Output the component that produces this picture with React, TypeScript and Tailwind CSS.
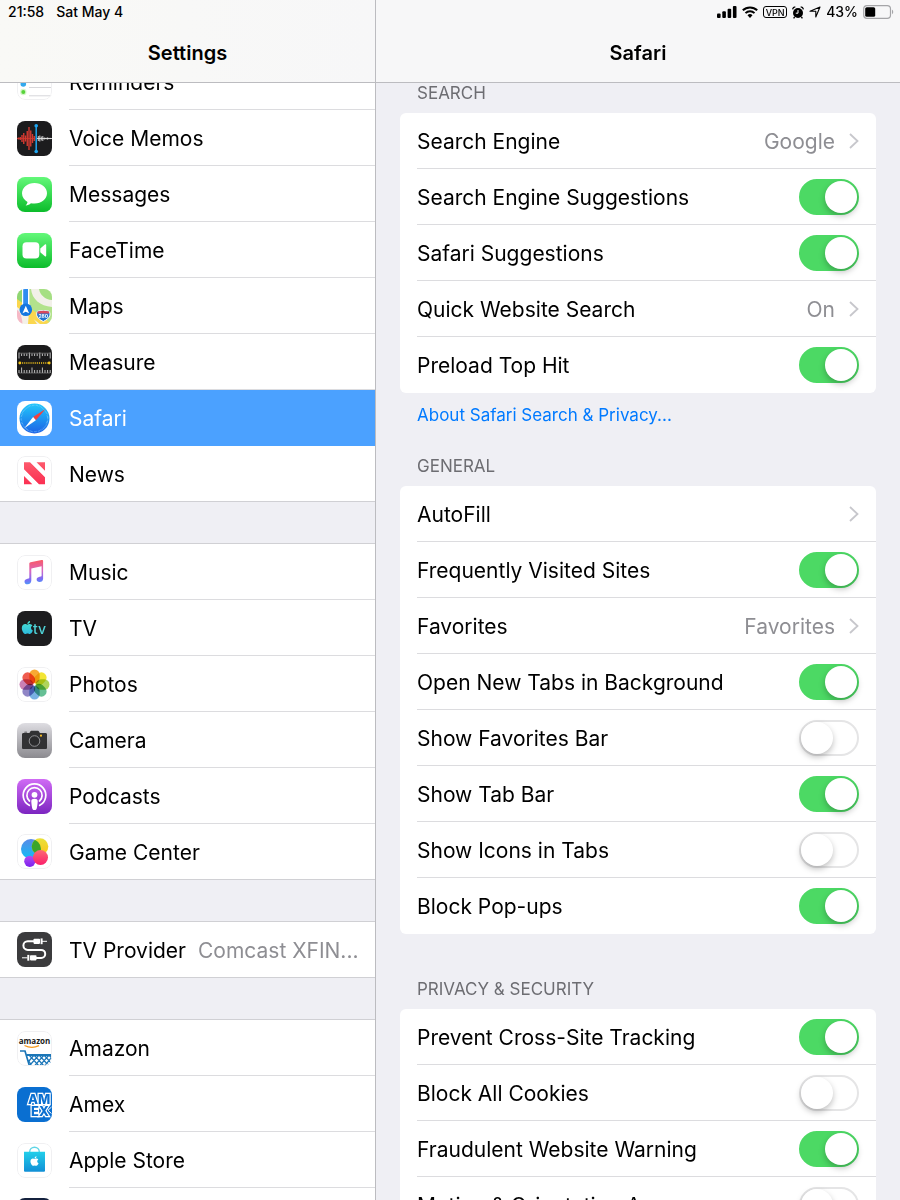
import type { ReactNode } from "react";
import clsx from "clsx";
import { FaApple } from "react-icons/fa";

/* ---------- App icons ---------- */

function Tile({
  fill = "#ffffff",
  outlined = false,
  children,
}: {
  fill?: string;
  outlined?: boolean;
  children?: ReactNode;
}) {
  return (
    <svg viewBox="0 0 35 35" className="size-[35px] shrink-0 rounded-lg" aria-hidden="true">
      <rect width="35" height="35" fill={fill} />
      {children}
      {outlined && (
        <rect x="0.5" y="0.5" width="34" height="34" rx="7.5" fill="none" stroke="#f0f0f2" />
      )}
    </svg>
  );
}

function Gradient({ id, stops }: { id: string; stops: string[] }) {
  return (
    <linearGradient id={id} x1="0" y1="0" x2="0" y2="1">
      {stops.map((color, i) => (
        <stop key={color} offset={i / (stops.length - 1)} stopColor={color} />
      ))}
    </linearGradient>
  );
}

function RemindersIcon() {
  return (
    <Tile outlined>
      <circle cx="6.3" cy="11" r="2.6" fill="#ff9500" />
      <circle cx="6.3" cy="19" r="2.8" fill="#32a9ee" />
      <circle cx="6.3" cy="27" r="3.2" fill="#d5f5cb" />
      <circle cx="6.3" cy="27" r="2" fill="#57d33a" />
      <path d="M12 14.5h23M12 22.5h23M12 30.8h23" stroke="#d2d2d6" strokeWidth="0.9" />
    </Tile>
  );
}

function VoiceMemosIcon() {
  const red = [1, 1.5, 3.5, 5.5, 3, 7.5, 11.5, 8, 4.5, 2.5];
  const white = [2.5, 3, 2, 2.5, 1, 0.7, 1.2, 0.7, 0.6];
  return (
    <Tile fill="#1c1c1e">
      <path d="M0 17.5h18" stroke="#d33a31" strokeWidth="0.8" />
      <path d="M20 17.5h15" stroke="#ffffff" strokeWidth="0.8" />
      {red.map((h, i) => (
        <path key={i} d={`M${1.5 + i * 1.75} ${17.5 - h}v${h * 2}`} stroke="#d33a31" strokeWidth="1.4" />
      ))}
      {white.map((h, i) => (
        <path key={i} d={`M${21.3 + i * 1.5} ${17.5 - h}v${h * 2}`} stroke="#e5e5e5" strokeWidth="0.9" />
      ))}
      <path d="M19.2 4.5v26" stroke="#1ea7f2" strokeWidth="1.5" />
      <circle cx="19.2" cy="4.7" r="1.8" fill="#1ea7f2" />
      <circle cx="19.2" cy="30.5" r="1.8" fill="#1ea7f2" />
    </Tile>
  );
}

function MessagesIcon() {
  return (
    <Tile fill="url(#messages)">
      <Gradient id="messages" stops={["#63f879", "#0cbc2b"]} />
      <path
        d="M17.5 6C10.500 6 5 10.500 5 16.300c0 3.700 2.200 6.800 5.500 8.600-.2 1.300-.8 2.500-1.900 3.500 2.100-.1 3.900-.9 5.300-2.200 1.200.3 2.400.4 3.600.4 7 0 12.500-4.600 12.500-10.300S24.500 6 17.500 6z"
        fill="#fff"
      />
    </Tile>
  );
}

function FaceTimeIcon() {
  return (
    <Tile fill="url(#facetime)">
      <Gradient id="facetime" stops={["#63f879", "#0cbc2b"]} />
      <rect x="5.500" y="9.300" width="16.800" height="16.200" rx="4" fill="#fff" />
      <path d="M23.300 15.600l4.600-4.100c.7-.6 1.300-.3 1.300.5v10.800c0 .8-.6 1.100-1.300.5l-4.600-4.100z" fill="#fff" />
    </Tile>
  );
}

function MapsIcon() {
  return (
    <Tile fill="#f4f1e8">
      <rect width="5" height="16" fill="#8fd672" />
      <path d="M12.500 0h5c1 8 7 14 17.500 15.500V35h-9C19 30 13.500 25 12.500 20z" fill="#b2e28c" />
      <path d="M14 0h8c1 6 6 10.500 13 11v7C23 17 15 10 14 0z" fill="#f2f0e9" />
      <path d="M22 0h13v11C28 10.500 23 6 22 0z" fill="#a5df83" />
      <path d="M0 10l35 25h-12L0 18z" fill="#fbd74e" />
      <path d="M0 21c3 1 5 7 5.500 14H0z" fill="#f6b9c6" />
      <path d="M12 23l8 12h-9z" fill="#fbd74e" />
      <rect x="5" width="7" height="20" fill="#fff" />
      <rect x="6.200" width="4.800" height="18" fill="#2f8df0" />
      <circle cx="8.800" cy="20.800" r="6.300" fill="#1677e0" />
      <path d="M8.800 16.700l3.300 7.600-3.300-1.500-3.300 1.500z" fill="#fff" />
      <path
        d="M20.500 22.300c2-.6 3.500-.7 5.800-.7s3.800.1 5.800.7c.7 1.300 1.100 2.400.8 4-.7 3-3.600 4.600-6.600 6.200-3-1.600-5.900-3.200-6.600-6.200-.3-1.600.1-2.700.8-4z"
        fill="#2274cf"
        stroke="#fff"
        strokeWidth="1"
      />
      <path d="M20.500 22.400c4-1 7.600-1 11.600 0v2H20.500z" fill="#d8495d" />
      <text x="26.300" y="29.300" textAnchor="middle" className="font-['Inter'] text-[5px] font-bold" fill="#fff">
        280
      </text>
    </Tile>
  );
}

function MeasureIcon() {
  return (
    <Tile fill="#1b1b1c">
      {Array.from({ length: 13 }, (_, i) => (
        <path
          key={i}
          d={`M${2 + i * 2.6} ${i % 4 === 0 ? 7.5 : 8.500}V${i % 4 === 0 ? 13.500 : 11}M${2 + i * 2.6} 28V${i % 4 === 1 ? 22.500 : 25}`}
          stroke="#cfcfcf"
          strokeWidth="0.9"
        />
      ))}
      <path d="M2 8.200h31M2 28h31" stroke="#8b8b8b" strokeWidth="0.600" />
      <path d="M3 18h29" stroke="#f5c518" strokeWidth="1.400" strokeDasharray="1.100 1" />
      <circle cx="2.800" cy="18" r="1.400" fill="#f5c518" />
      <circle cx="32.200" cy="18" r="1.400" fill="#f5c518" />
    </Tile>
  );
}

function SafariIcon() {
  return (
    <Tile>
      <Gradient id="safari" stops={["#21c8fb", "#1d62e6"]} />
      <circle cx="17.500" cy="17.500" r="15" fill="url(#safari)" />
      <circle cx="17.500" cy="17.500" r="13.200" fill="none" stroke="#8fd4fb" strokeWidth="1.300" strokeDasharray="0.400 0.980" />
      <path d="M28.500 8L16.100 16l2.800 3.200z" fill="#f5413d" />
      <path d="M7.300 27.300L16.100 16l2.800 3.200z" fill="#fff" />
    </Tile>
  );
}

function NewsIcon() {
  return (
    <Tile outlined>
      <Gradient id="news" stops={["#fd5a6c", "#fb2f52"]} />
      <path
        d="M7 6.300h6L28 21.300v7h-6L7 13.300zM19.500 6.300H28v8.500zM7 20v8.300h8.300z"
        fill="url(#news)"
      />
    </Tile>
  );
}

function MusicIcon() {
  return (
    <Tile outlined>
      <linearGradient id="music" gradientUnits="userSpaceOnUse" x1="17" y1="5" x2="19" y2="29">
        <stop offset="0" stopColor="#fb5a62" />
        <stop offset="0.450" stopColor="#d966c0" />
        <stop offset="0.800" stopColor="#7c6cf5" />
        <stop offset="1" stopColor="#4b9bf8" />
      </linearGradient>
      <path
        d="M12.300 8.900c0-.9.400-1.400 1.300-1.600l11-2.200c1-.2 1.500.2 1.500 1.100v17.600c0 2-1.500 3.300-3.500 3.300-1.800 0-3-1-3-2.500 0-1.600 1.200-2.500 3-2.900l1.200-.2c.6-.1.800-.4.800-1v-9.200l-10.300 2.100v12c0 2.300-1.500 3.900-3.700 3.900-1.900 0-3.100-1-3.100-2.600s1.200-2.500 3-2.900l1-.2c.6-.1.800-.4.800-1z"
        fill="url(#music)"
      />
    </Tile>
  );
}

function TvIcon() {
  return (
    <Tile fill="#1d1d1f">
      <Gradient id="tv" stops={["#4be3d0", "#2cb9dc"]} />
      <FaApple x="2.800" y="9" size={15} fill="url(#tv)" />
      <text x="16" y="22.500" className="font-['Inter'] text-[14px] font-medium" fill="#4fd2d6">
        tv
      </text>
    </Tile>
  );
}

function PhotosIcon() {
  const petals = ["#f8a01c", "#f2e21e", "#a6d04a", "#55b98a", "#6aa9e0", "#8479c0", "#c572ad", "#ee4a3c"];
  return (
    <Tile outlined>
      <g className="isolate">
        {petals.map((color, i) => (
          <rect
            key={color}
            x="12.300"
            y="2.500"
            width="10.400"
            height="13.800"
            rx="5.200"
            fill={color}
            opacity="0.900"
            transform={`rotate(${i * 45} 17.500 17.500)`}
            className="mix-blend-multiply"
          />
        ))}
      </g>
    </Tile>
  );
}

function CameraIcon() {
  return (
    <Tile fill="url(#camera)">
      <Gradient id="camera" stops={["#dedde2", "#8b8a8f"]} />
      <path
        d="M6.500 10h5.200c.8 0 1-.3 1.300-1 .4-.9.900-1.300 1.900-1.300h5.500c1 0 1.500.4 1.900 1.300.3.700.5 1 1.300 1h4.900c1 0 1.500.6 1.500 1.500v13c0 1-.5 1.500-1.500 1.500h-22C5.500 26 5 25.500 5 24.500v-13C5 10.600 5.500 10 6.500 10z"
        fill="#323234"
      />
      <rect x="7.200" y="8.800" width="3" height="0.800" rx="0.400" fill="#323234" />
      <circle cx="17.500" cy="18" r="5.300" fill="#2b2b2d" stroke="#9a9a9d" strokeWidth="0.900" />
      <circle cx="24" cy="12.700" r="1.100" fill="#f3b81f" />
    </Tile>
  );
}

function PodcastsIcon() {
  return (
    <Tile fill="url(#podcasts)">
      <Gradient id="podcasts" stops={["#d06bf5", "#7c25c0"]} />
      <g fill="none" stroke="#fff" strokeWidth="1.700" strokeLinecap="round">
        <path d="M12.300 26.300a11.300 11.300 0 1 1 10.400 0" />
        <path d="M12.500 22a7.600 7.600 0 1 1 10 0" />
      </g>
      <circle cx="17.500" cy="15.800" r="2.900" fill="#fff" />
      <path d="M14.300 22c0-1.600 1.300-2.300 3.200-2.300s3.200.7 3.200 2.300c0 2-.5 5.200-.9 7.200-.3 1.300-1 1.900-2.300 1.900s-2-.6-2.300-1.900c-.4-2-.9-5.200-.9-7.200z" fill="#fff" />
    </Tile>
  );
}

function GameCenterIcon() {
  return (
    <Tile outlined>
      <Gradient id="gc-blue" stops={["#5a8be8", "#10bdf5"]} />
      <Gradient id="gc-yellow" stops={["#e8e23a", "#fcc417"]} />
      <Gradient id="gc-red" stops={["#fb6a75", "#fb1f6b"]} />
      <Gradient id="gc-purple" stops={["#b44df0", "#7c20ee"]} />
      <clipPath id="gc-overlap">
        <ellipse cx="14" cy="15" rx="10" ry="10" />
      </clipPath>
      <ellipse cx="14" cy="15" rx="10" ry="10" fill="url(#gc-blue)" />
      <circle cx="23" cy="12.500" r="8.300" fill="url(#gc-yellow)" />
      <circle cx="23" cy="12.500" r="8.300" fill="#3ba52a" clipPath="url(#gc-overlap)" />
      <circle cx="12.800" cy="27.300" r="5.600" fill="url(#gc-purple)" />
      <circle cx="23.500" cy="23.500" r="7.500" fill="url(#gc-red)" />
    </Tile>
  );
}

function TvProviderIcon() {
  return (
    <Tile fill="#3b3b3d">
      <path
        d="M17 9.300h-6.300a4.300 4.300 0 0 0 0 8.600h13.500a4 4 0 0 1 0 8H19"
        fill="none"
        stroke="#fff"
        strokeWidth="2"
      />
      <rect x="16.500" y="6.700" width="6.500" height="5.200" rx="0.800" fill="#fff" />
      <rect x="23.600" y="6.400" width="2" height="5.800" fill="#fff" />
      <path d="M25 9.300h5" stroke="#fff" strokeWidth="1" />
      <rect x="13" y="23.200" width="6.500" height="5.200" rx="0.800" fill="#fff" />
      <rect x="10.300" y="22.900" width="2" height="5.800" fill="#fff" />
      <path d="M5 25.800h5.500" stroke="#fff" strokeWidth="1" />
    </Tile>
  );
}

function AmazonIcon() {
  return (
    <Tile outlined>
      <text x="17.500" y="12.800" textAnchor="middle" className="font-['Open_Sans'] text-[8px] font-bold" fill="#1a1a1a">
        amazon
      </text>
      <path d="M7.500 14.500c4.500 2.300 10 2.300 14.500.2" fill="none" stroke="#f79a1e" strokeWidth="1.300" />
      <path d="M3 20h5l4.500 15" fill="none" stroke="#1b76b8" strokeWidth="1.700" />
      <path d="M9.500 24H35" stroke="#1b76b8" strokeWidth="1.800" />
      <path
        d="M12 24l10 11M17 24l10 11M22 24l10 11M27 24l8 9M32 24l3 3.500M11.500 29l3 6M17 24l-5 6M22 24l-9 10M27 24l-9.500 11M32 24l-9.500 11M35 26l-7.500 9M35 32l-2.500 3"
        fill="none"
        stroke="#1b76b8"
        strokeWidth="1.200"
      />
    </Tile>
  );
}

function AmexIcon() {
  return (
    <Tile fill="#0a6fd1">
      <text
        className="font-['Inter'] text-[13px] font-extrabold"
        fill="#0a6fd1"
        stroke="#fff"
        strokeWidth="2.400"
        paintOrder="stroke"
      >
        <tspan x="11" y="17">AM</tspan>
        <tspan x="14" y="28.500">EX</tspan>
      </text>
      <path d="M34.500 20l-3.500 3.300 3.500 3.300" fill="none" stroke="#fff" strokeWidth="1" />
    </Tile>
  );
}

function AppleStoreIcon() {
  return (
    <Tile outlined>
      <Gradient id="store" stops={["#22cfea", "#118fd6"]} />
      <path d="M12.700 9.500V9a4.800 4.800 0 0 1 9.600 0v.5" fill="none" stroke="#5fd5e6" strokeWidth="1.400" />
      <path d="M7 8.700h21v18.800c0 .8-.5 1.300-1.300 1.300H8.300c-.8 0-1.300-.5-1.300-1.300z" fill="url(#store)" />
      <FaApple x="12" y="12.500" size={11} fill="#fff" />
    </Tile>
  );
}

/* ---------- Status bar ---------- */

function StatusIcons() {
  return (
    <div className="flex h-6 items-center justify-end gap-[5px] pr-1.5 text-sm font-medium">
      <svg viewBox="0 0 20 12" className="h-3 w-5" aria-label="Signal">
        <rect x="0" y="7.500" width="3.600" height="4.500" rx="1" />
        <rect x="5.300" y="5.300" width="3.600" height="6.700" rx="1" />
        <rect x="10.600" y="2.800" width="3.600" height="9.200" rx="1" />
        <rect x="15.900" y="0" width="3.600" height="12" rx="1" />
      </svg>
      <svg viewBox="0 0 16 12" className="h-3 w-4" aria-label="Wi-Fi">
        <g fill="none" stroke="#000" strokeWidth="2">
          <path d="M.8 4.300a10.400 10.400 0 0 1 14.400 0" />
          <path d="M3.500 7.100a6.500 6.500 0 0 1 9 0" />
        </g>
        <path d="M8 12L5.500 9.300a3.600 3.600 0 0 1 5 0z" />
      </svg>
      <span className="flex h-3 w-6 items-center justify-center rounded-[3px] border border-black text-[9px] leading-none">
        VPN
      </span>
      <svg viewBox="0 0 12 13" className="h-[13px] w-3" aria-label="Alarm">
        <circle cx="6" cy="7" r="5" />
        <path d="M.6 3.300A3 3 0 0 1 3.300.8M11.400 3.300A3 3 0 0 0 8.700.8M2.600 11l-1 1.400M9.400 11l1 1.400" fill="none" stroke="#000" strokeWidth="1.300" />
        <path d="M6 4v3.200H3.800" fill="none" stroke="#fff" strokeWidth="1" />
      </svg>
      <svg viewBox="0 0 12 12" className="size-3" aria-label="Location">
        <path d="M11 1L6.800 11V5.300H1z" fill="none" stroke="#000" strokeWidth="1.100" strokeLinejoin="round" />
      </svg>
      <span>43%</span>
      <svg viewBox="0 0 31 14" className="h-3.5 w-[31px]" aria-label="Battery">
        <rect x="0.700" y="0.700" width="26.800" height="12.600" rx="3.300" fill="none" stroke="#a5a5a8" strokeWidth="1.200" />
        <rect x="2.200" y="2.200" width="10" height="9.600" rx="1.600" />
        <path d="M29 4.800c1.600.5 1.600 3.900 0 4.400z" fill="#a5a5a8" />
      </svg>
    </div>
  );
}

/* ---------- Sidebar ---------- */

type App = { name: string; icon: ReactNode; detail?: string };

const appGroups: App[][] = [
  [
    { name: "Reminders", icon: <RemindersIcon /> },
    { name: "Voice Memos", icon: <VoiceMemosIcon /> },
    { name: "Messages", icon: <MessagesIcon /> },
    { name: "FaceTime", icon: <FaceTimeIcon /> },
    { name: "Maps", icon: <MapsIcon /> },
    { name: "Measure", icon: <MeasureIcon /> },
    { name: "Safari", icon: <SafariIcon /> },
    { name: "News", icon: <NewsIcon /> },
  ],
  [
    { name: "Music", icon: <MusicIcon /> },
    { name: "TV", icon: <TvIcon /> },
    { name: "Photos", icon: <PhotosIcon /> },
    { name: "Camera", icon: <CameraIcon /> },
    { name: "Podcasts", icon: <PodcastsIcon /> },
    { name: "Game Center", icon: <GameCenterIcon /> },
  ],
  [{ name: "TV Provider", icon: <TvProviderIcon />, detail: "Comcast XFIN..." }],
  [
    { name: "Amazon", icon: <AmazonIcon /> },
    { name: "Amex", icon: <AmexIcon /> },
    { name: "Apple Store", icon: <AppleStoreIcon /> },
    { name: "", icon: <Tile fill="#14213d" /> },
  ],
];

function AppRow({ app, selected, last }: { app: App; selected: boolean; last: boolean }) {
  return (
    <button
      type="button"
      className={clsx(
        "flex h-14 w-full items-center gap-[17px] pl-[17px] text-left",
        selected ? "bg-[#4ba1ff] text-white" : "bg-white",
        last && "border-b border-[#d0d0d4]"
      )}
    >
      {app.icon}
      <span
        className={clsx(
          "flex min-w-0 flex-1 items-center gap-3 self-stretch pt-0.5 pr-3",
          !last && "border-b",
          selected ? "border-[#4ba1ff]" : "border-[#dcdcdf]"
        )}
      >
        <span className="whitespace-nowrap">{app.name}</span>
        {app.detail && <span className="truncate text-[#8e8e93]">{app.detail}</span>}
      </span>
    </button>
  );
}

/* ---------- Safari pane ---------- */

type Setting = { label: string; on?: boolean; value?: string };

const sections: { title: string; link?: string; settings: Setting[] }[] = [
  {
    title: "SEARCH",
    link: "About Safari Search & Privacy...",
    settings: [
      { label: "Search Engine", value: "Google" },
      { label: "Search Engine Suggestions", on: true },
      { label: "Safari Suggestions", on: true },
      { label: "Quick Website Search", value: "On" },
      { label: "Preload Top Hit", on: true },
    ],
  },
  {
    title: "GENERAL",
    settings: [
      { label: "AutoFill", value: "" },
      { label: "Frequently Visited Sites", on: true },
      { label: "Favorites", value: "Favorites" },
      { label: "Open New Tabs in Background", on: true },
      { label: "Show Favorites Bar", on: false },
      { label: "Show Tab Bar", on: true },
      { label: "Show Icons in Tabs", on: false },
      { label: "Block Pop-ups", on: true },
    ],
  },
  {
    title: "PRIVACY & SECURITY",
    settings: [
      { label: "Prevent Cross-Site Tracking", on: true },
      { label: "Block All Cookies", on: false },
      { label: "Fraudulent Website Warning", on: true },
      { label: "Motion & Orientation Access", on: false },
    ],
  },
];

function SettingRow({ setting }: { setting: Setting }) {
  const row =
    "flex h-14 w-full items-center justify-between border-b border-[#dcdcdf] pr-[17px] text-left group-last:border-transparent";

  if (setting.on === undefined) {
    return (
      <button type="button" className={row}>
        <span className="pt-0.5">{setting.label}</span>
        <span className="flex items-center gap-3.5 text-[#8e8e93]">
          <span className="pt-0.5">{setting.value}</span>
          <svg viewBox="0 0 10 16" className="h-4 w-2.5" aria-hidden="true">
            <path d="M1 1l7.500 7L1 15" fill="none" stroke="#c7c7cc" strokeWidth="1.800" />
          </svg>
        </span>
      </button>
    );
  }

  return (
    <label className={row}>
      <span className="pt-0.5">{setting.label}</span>
      <input
        type="checkbox"
        role="switch"
        defaultChecked={setting.on}
        className="flex h-9 w-15 shrink-0 appearance-none items-center rounded-full border-2 border-[#e5e5e6] bg-white before:size-8 before:rounded-full before:bg-white before:shadow-[0_3px_6px_rgba(0,0,0,0.25)] checked:justify-end checked:border-[#4cd964] checked:bg-[#4cd964]"
      />
    </label>
  );
}

export default function App() {
  return (
    <div className="flex h-screen overflow-hidden bg-[#efeff4] font-['Inter',sans-serif] text-[21px] leading-7 text-black">
      <aside className="flex w-5/12 flex-col">
        <header className="z-10 border-b border-[#bcbcc0] bg-linear-to-r from-[#f9f9f6] to-[#f7f7f8]">
          <div className="flex h-6 items-center gap-3 pl-2 text-sm font-medium">
            <span>21:58</span>
            <span>Sat May 4</span>
          </div>
          <h1 className="flex h-[58px] items-center justify-center text-xl font-semibold">Settings</h1>
        </header>
        {/* scrolled part way, so the first row sits under the header */}
        <nav className="-mt-[30px] flex min-h-0 flex-1 flex-col gap-[41px] overflow-hidden">
          {appGroups.map((group, g) => (
            <div key={g} className="shrink-0 border-t border-[#d0d0d4]">
              {group.map((app, i) => (
                <AppRow
                  key={app.name}
                  app={app}
                  selected={app.name === "Safari"}
                  last={i === group.length - 1}
                />
              ))}
            </div>
          ))}
        </nav>
      </aside>

      <main className="flex min-w-0 flex-1 flex-col border-l border-[#bcbcc0]">
        <header className="border-b border-[#bcbcc0] bg-[#f7f7f8]">
          <StatusIcons />
          <h2 className="flex h-[58px] items-center justify-center text-xl font-semibold">Safari</h2>
        </header>
        <div className="flex min-h-0 flex-1 flex-col gap-[45px] overflow-hidden px-6">
          {sections.map((section) => (
            <section key={section.title} className="shrink-0">
              <h3 className="mb-2.5 pl-[17px] text-[17px] leading-5 text-[#6d6d72]">{section.title}</h3>
              <ul className="rounded-md bg-white pl-[17px]">
                {section.settings.map((setting) => (
                  <li key={setting.label} className="group">
                    <SettingRow setting={setting} />
                  </li>
                ))}
              </ul>
              {section.link && (
                <a href="#privacy" className="mt-2.5 -mb-4 block pl-[17px] text-[17px] leading-6 text-[#007aff]">
                  {section.link}
                </a>
              )}
            </section>
          ))}
        </div>
      </main>
    </div>
  );
}
